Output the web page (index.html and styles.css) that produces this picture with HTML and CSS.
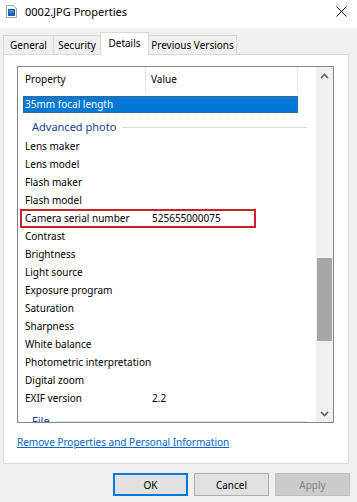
FILE: index.html
```html
<!DOCTYPE html>
<html lang="en">
<head>
    <meta charset="UTF-8">
    <meta name="viewport" content="width=device-width, initial-scale=1.0">
    <title>0002.JPG Properties</title>
    <link rel="stylesheet" href="styles.css">
</head>
<body>
    <div class="titlebar">
        <svg class="file-icon" width="11" height="13" viewBox="0 0 11 13">
            <path d="M0.5 0.5 H7.5 L10.5 3.5 V12.5 H0.5 Z" fill="#fff" stroke="#9aa4b0"/>
            <rect x="2" y="4" width="7" height="7" fill="#1e5fa8"/>
            <rect x="3" y="5" width="5" height="3" fill="#3c8ad8"/>
        </svg>
        <span class="title">0002.JPG Properties</span>
        <svg class="close" width="11" height="11" viewBox="0 0 11 11">
            <path d="M0.5 0.5 L10.5 10.5 M10.5 0.5 L0.5 10.5" stroke="#111" stroke-width="1"/>
        </svg>
    </div>

    <div class="tabs">
        <div class="tab tab-general">General</div>
        <div class="tab tab-security">Security</div>
        <div class="tab tab-details active">Details</div>
        <div class="tab tab-versions">Previous Versions</div>
    </div>

    <div class="panel">
        <div class="listbox">
            <div class="list">
                <div class="list-header">
                    <div class="col-prop">Property</div>
                    <div class="col-val">Value</div>
                </div>
                <div class="list-body">
                    <div class="row selected">35mm focal length</div>
                    <div class="group"><span>Advanced photo</span><i></i></div>
                    <div class="row">Lens maker</div>
                    <div class="row">Lens model</div>
                    <div class="row">Flash maker</div>
                    <div class="row">Flash model</div>
                    <div class="row marked"><span class="prop">Camera serial number</span><span class="val">525655000075</span></div>
                    <div class="row">Contrast</div>
                    <div class="row">Brightness</div>
                    <div class="row">Light source</div>
                    <div class="row">Exposure program</div>
                    <div class="row">Saturation</div>
                    <div class="row">Sharpness</div>
                    <div class="row">White balance</div>
                    <div class="row">Photometric interpretation</div>
                    <div class="row">Digital zoom</div>
                    <div class="row"><span class="prop">EXIF version</span><span class="val">2.2</span></div>
                    <div class="group last"><span>File</span><i></i></div>
                </div>
            </div>
            <div class="scrollbar">
                <div class="arrow">
                    <svg width="9" height="6" viewBox="0 0 9 6"><path d="M1 5 L4.5 1.5 L8 5" fill="none" stroke="#606060" stroke-width="1.6"/></svg>
                </div>
                <div class="track"><div class="thumb"></div></div>
                <div class="arrow">
                    <svg width="9" height="6" viewBox="0 0 9 6"><path d="M1 1 L4.5 4.5 L8 1" fill="none" stroke="#606060" stroke-width="1.6"/></svg>
                </div>
            </div>
        </div>
        <a class="link" href="#">Remove Properties and Personal Information</a>
    </div>

    <div class="buttons">
        <button class="btn default">OK</button>
        <button class="btn">Cancel</button>
        <button class="btn disabled">Apply</button>
    </div>
</body>
</html>
```

FILE: styles.css
```css
body {
    margin: 0;
    width: 357px;
    height: 502px;
    overflow: hidden;
    background-color: #f0f0f0;
    font-family: "Noto Sans", "Open Sans", sans-serif;
    font-size: 10px;
    color: #000;
}

.titlebar {
    height: 28px;
    background-color: #fff;
    display: flex;
    align-items: flex-start;
    padding: 4px 10px 0 6px;
    box-sizing: border-box;
}

.file-icon {
    margin-top: 1px;
    margin-right: 8px;
}

.title {
    font-size: 11px;
    line-height: 15px;
    flex: 1;
}

.close {
    margin-top: 2px;
}

.tabs {
    display: flex;
    align-items: flex-end;
    height: 26px;
    padding-left: 3px;
}

.tab {
    height: 19px;
    line-height: 18px;
    border: 1px solid #d9d9d9;
    border-bottom: none;
    box-sizing: border-box;
    text-align: center;
    white-space: nowrap;
    margin-left: -1px;
}

.tab-general { width: 51px; margin-left: 0; }
.tab-security { width: 48px; }
.tab-details { width: 49px; }
.tab-versions { width: 89px; }

.tab.active {
    height: 23px;
    line-height: 21px;
    background-color: #fff;
    margin-bottom: -1px;
    position: relative;
    z-index: 1;
}

.panel {
    margin: 0 8px 0 3px;
    height: 410px;
    background-color: #fff;
    border: 1px solid #d9d9d9;
    box-sizing: border-box;
    padding: 11px 0 0 13px;
}

.listbox {
    width: 317px;
    height: 357px;
    border: 1px solid #828790;
    box-sizing: border-box;
    display: flex;
}

.list {
    flex: 1;
    overflow: hidden;
}

.list-header {
    display: flex;
    height: 25px;
    line-height: 24px;
}

.col-prop {
    width: 128px;
    padding-left: 7px;
    box-sizing: border-box;
    border-right: 1px solid #e5e5e5;
}

.col-val {
    width: 152px;
    padding-left: 5px;
    box-sizing: border-box;
    border-right: 1px solid #e5e5e5;
}

.list-body {
    padding-top: 4px;
}

.row {
    display: flex;
    height: 18px;
    line-height: 18px;
    margin-left: 5px;
    width: 275px;
    padding-left: 2px;
    box-sizing: border-box;
    white-space: nowrap;
}

.row .prop {
    width: 127px;
}

.row.selected {
    height: 17px;
    line-height: 15px;
    background-color: #0078d7;
    color: #fff;
    border: 1px dotted #5a5a5a;
    padding-left: 1px;
}

.row.marked {
    position: relative;
}

.row.marked::after {
    content: "";
    position: absolute;
    left: -3px;
    top: 0;
    width: 236px;
    height: 19px;
    border: 2px solid #c9212e;
    box-sizing: border-box;
}

.group {
    display: flex;
    align-items: center;
    height: 24px;
    padding: 3px 0 0 14px;
    box-sizing: border-box;
    color: #1e3c8c;
    font-size: 11px;
}

.group i {
    flex: 1;
    height: 1px;
    background-color: #d8dde6;
    margin: 1px 9px 0 6px;
}

.scrollbar {
    width: 17px;
    background-color: #f0f0f0;
    display: flex;
    flex-direction: column;
}

.arrow {
    height: 17px;
    display: flex;
    align-items: center;
    justify-content: center;
}

.track {
    flex: 1;
    padding-top: 174px;
}

.thumb {
    height: 83px;
    margin: 0 1px;
    background-color: #a6a6a6;
}

.link {
    display: inline-block;
    margin-top: 12px;
    line-height: 14px;
    color: #0066cc;
}

.buttons {
    display: flex;
    justify-content: flex-end;
    gap: 6px;
    padding: 9px 7px 0 0;
}

.btn {
    width: 75px;
    height: 23px;
    font-family: inherit;
    font-size: 10px;
    background-color: #e1e1e1;
    border: 1px solid #adadad;
    padding: 0;
    color: #000;
}

.btn.default {
    border-color: #0078d7;
    box-shadow: inset 0 0 0 1px #0078d7;
}

.btn.disabled {
    background-color: #cccccc;
    border-color: #bfbfbf;
    color: #838383;
}
```
